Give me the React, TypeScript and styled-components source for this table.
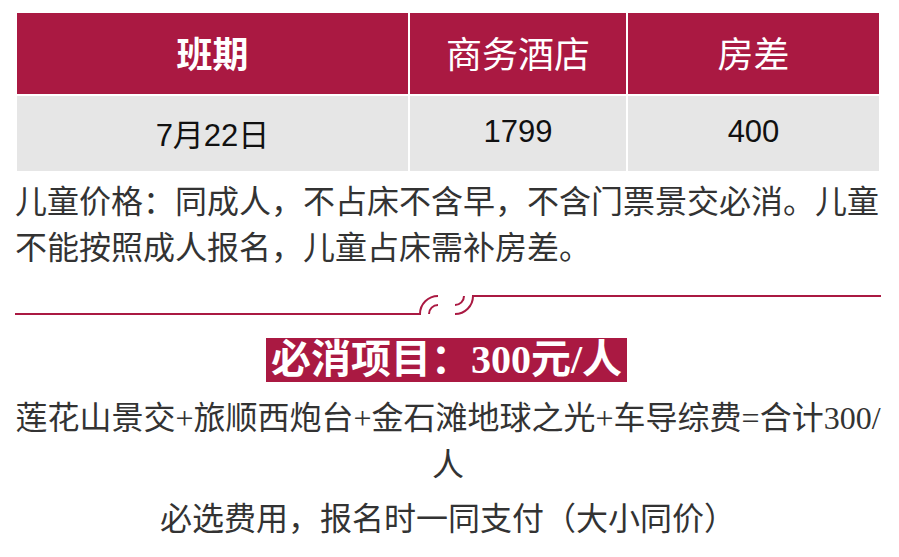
import React from "react";
import styled, { createGlobalStyle } from "styled-components";

const Crimson = "#aa1942";

const GlobalStyle = createGlobalStyle`
    html, body {
        margin: 0;
        padding: 0;
        background: #ffffff;
    }
    body {
        font-family: "Noto Sans CJK SC", sans-serif;
        color: #333333;
    }
`;

const Page = styled.div`
    width: 866px;
    padding: 11px 0 0 15px;
`;

const PriceTable = styled.div`
    display: grid;
    grid-template-columns: 391px 216px 251px;
    grid-template-rows: 81px 75px;
    gap: 2px;
    padding: 2px;
    background: #ffffff;
`;

const HeadCell = styled.div<{ $bold?: boolean }>`
    background: ${Crimson};
    color: #ffffff;
    display: flex;
    align-items: center;
    justify-content: center;
    padding-bottom: 3px;
    font-family: "Liberation Sans", "Noto Sans CJK SC", sans-serif;
    font-size: 36px;
    font-weight: ${(p) => (p.$bold ? 700 : 400)};
`;

const DataCell = styled.div`
    background: #e6e6e6;
    color: #111111;
    display: flex;
    align-items: center;
    justify-content: center;
    padding-bottom: 3px;
    font-family: "Liberation Sans", "Noto Sans CJK SC", sans-serif;
    font-size: 31px;
`;

const Note = styled.p`
    margin: 3px 0 0;
    font-size: 32px;
    line-height: 46px;
    color: #333333;
`;

const Divider = styled.div`
    margin-top: 19px;
    height: 32px;
    svg {
        display: block;
    }
`;

const TitleRow = styled.div`
    display: flex;
    justify-content: center;
    margin-top: 19px;
`;

const Title = styled.h2`
    margin: 0 0 0 -3px;
    padding: 0 5px;
    height: 44px;
    line-height: 44px;
    background: ${Crimson};
    color: #ffffff;
    font-family: "Liberation Serif", "Noto Sans CJK SC", serif;
    font-size: 40px;
    font-weight: 700;
`;

const Centered = styled.p<{ $gap?: number }>`
    margin: ${(p) => p.$gap ?? 0}px 0 0;
    text-align: center;
    font-family: "Liberation Serif", "Noto Sans CJK SC", serif;
    font-size: 32px;
    line-height: 47px;
    color: #333333;
`;

const Ornament = () => (
    <svg width="866" height="32" viewBox="0 0 866 32" fill="none" stroke={Crimson} strokeWidth="2">
        <path d="M0 27 H405 A18 18 0 0 1 423 9" />
        <path d="M414 27 A9 9 0 0 1 423 18" />
        <path d="M440 27 A18 18 0 0 0 458 9 H866" />
        <path d="M440 18 A9 9 0 0 0 449 9" />
    </svg>
);

const App: React.FC = () => {
    return (
        <Page>
            <GlobalStyle />
            <PriceTable>
                <HeadCell $bold>班期</HeadCell>
                <HeadCell>商务酒店</HeadCell>
                <HeadCell>房差</HeadCell>
                <DataCell>7月22日</DataCell>
                <DataCell>1799</DataCell>
                <DataCell>400</DataCell>
            </PriceTable>
            <Note>
                儿童价格：同成人，不占床不含早，不含门票景交必消。儿童不能按照成人报名，儿童占床需补房差。
            </Note>
            <Divider>
                <Ornament />
            </Divider>
            <TitleRow>
                <Title>必消项目：300元/人</Title>
            </TitleRow>
            <Centered $gap={13}>
                莲花山景交+旅顺西炮台+金石滩地球之光+车导综费=合计300/人
            </Centered>
            <Centered $gap={7}>必选费用，报名时一同支付（大小同价）</Centered>
        </Page>
    );
};

export default App;
